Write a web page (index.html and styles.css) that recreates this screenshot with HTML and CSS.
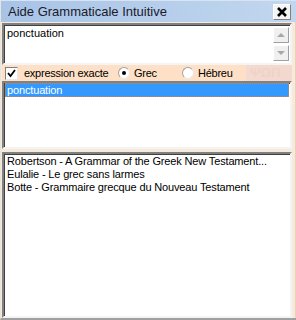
FILE: index.html
```html
<!DOCTYPE html>
<html>
	<head>
		<meta charset="UTF-8">
		<title>Aide Grammaticale Intuitive</title>
		<link rel="stylesheet" href="styles.css">
	</head>
	<body>
		<div class="window">
			<div class="titleBar">
				<span class="titleText">Aide Grammaticale Intuitive</span>
				<span class="closeBu">
					<svg width="10" height="10" viewBox="0 0 10 10">
						<path d="M1 1 L9 9 M9 1 L1 9" stroke="#000" stroke-width="2.6" />
					</svg>
				</span>
			</div>
			<div class="content">
				<div class="searchBox">
					<div class="searchText">ponctuation</div>
					<div class="scroll">
						<span class="scrollBu"><span class="arrowUp"></span></span>
						<span class="scrollBu"><span class="arrowDown"></span></span>
					</div>
				</div>
				<div class="optionsRow">
					<div class="options">
						<span class="check">
							<svg width="9" height="9" viewBox="0 0 9 9">
								<path d="M1 4 L3.5 7 L8 1" stroke="#000" stroke-width="1.8" fill="none" />
							</svg>
						</span>
						<span class="optLabel exact">expression exacte</span>
						<span class="radio on"></span>
						<span class="optLabel grec">Grec</span>
						<span class="radio"></span>
						<span class="optLabel">Hébreu</span>
					</div>
					<div class="watermark">ΨΩΠ</div>
				</div>
				<div class="wordList">
					<div class="item selected">ponctuation</div>
				</div>
				<div class="bookList">
					<div class="item">Robertson - A Grammar of the Greek New Testament...</div>
					<div class="item">Eulalie - Le grec sans larmes</div>
					<div class="item">Botte - Grammaire grecque du Nouveau Testament</div>
				</div>
			</div>
		</div>
	</body>
</html>
```

FILE: styles.css
```css
* {
	margin: 0px;
	padding: 0px;
	box-sizing: border-box;
}

body {
	width: 296px;
	height: 320px;
	overflow: hidden;
	font-family: "Liberation Sans", Arial, sans-serif;
	font-size: 11px;
	color: #000;
}

.window {
	width: 296px;
	height: 320px;
	display: flex;
	flex-direction: column;
	background: #f6eadc;
	border-left: 1px solid #e8e4dc;
	border-bottom: 2px solid #a0a0a0;
}

.titleBar {
	height: 22px;
	display: flex;
	align-items: center;
	justify-content: space-between;
	padding-left: 7px;
	padding-right: 5px;
	background: linear-gradient(to right, #a7c3e6, #c2d7ef);
	border-top: 1px solid #d8e4f2;
}

.titleText {
	font-size: 13px;
	color: #1a1a2a;
}

.closeBu {
	width: 18px;
	height: 16px;
	display: flex;
	align-items: center;
	justify-content: center;
	background: #f4f4f4;
	border: 1px solid #fff;
	border-right-color: #808080;
	border-bottom-color: #808080;
}

.content {
	flex: 1;
	display: flex;
	flex-direction: column;
	padding: 1px 3px 0px 1px;
	border-right: 1px solid #f0d0b0;
}

.searchBox {
	height: 42px;
	display: flex;
	background: #fff;
	border: 2px solid #808080;
	border-right-color: #f4f4f4;
	border-bottom-color: #f4f4f4;
	box-shadow: inset 1px 1px 0px #404040;
}

.searchText {
	flex: 1;
	padding: 2px 3px;
	font-size: 11px;
}

.scroll {
	width: 17px;
	display: flex;
	flex-direction: column;
	gap: 2px;
	padding: 2px 1px 0px 0px;
}

.scrollBu {
	height: 16px;
	display: flex;
	align-items: center;
	justify-content: center;
	background: #f0f0f0;
	border: 1px solid #fff;
	border-right-color: #a0a0a0;
	border-bottom-color: #a0a0a0;
}

.arrowUp {
	border-left: 4px solid transparent;
	border-right: 4px solid transparent;
	border-bottom: 4px solid #a8a8a8;
}

.arrowDown {
	border-left: 4px solid transparent;
	border-right: 4px solid transparent;
	border-top: 4px solid #a8a8a8;
}

.optionsRow {
	height: 16px;
	display: flex;
	align-items: center;
	background: linear-gradient(to right, #f8e4d4, #f3d8d0);
}

.options {
	width: 244px;
	height: 16px;
	display: flex;
	align-items: center;
	padding-left: 3px;
	background: #fde0c6;
}

.check {
	width: 13px;
	height: 13px;
	display: flex;
	align-items: center;
	justify-content: center;
	background: #fff;
	border: 1px solid #808080;
	border-right-color: #e8e8e8;
	border-bottom-color: #e8e8e8;
	margin-right: 6px;
}

.optLabel {
	font-size: 11px;
	letter-spacing: -0.25px;
	white-space: nowrap;
}

.exact {
	width: 94px;
}

.grec {
	width: 48px;
}

.radio {
	width: 12px;
	height: 12px;
	border-radius: 50%;
	background: #fff;
	border: 1px solid #a0a0a0;
	border-right-color: #e8e8e8;
	border-bottom-color: #e8e8e8;
	margin-right: 4px;
	display: flex;
	align-items: center;
	justify-content: center;
}

.radio.on::after {
	content: "";
	width: 4px;
	height: 4px;
	border-radius: 50%;
	background: #000;
}

.watermark {
	flex: 1;
	font-size: 13px;
	font-weight: bold;
	color: #efd2c8;
	padding-left: 4px;
	line-height: 16px;
	white-space: nowrap;
}

.wordList {
	height: 68px;
	background: #fff;
	border: 2px solid #808080;
	border-right-color: #f4f4f4;
	border-bottom-color: #f4f4f4;
	box-shadow: inset 1px 1px 0px #404040;
	padding: 0px 1px;
}

.item {
	height: 13px;
	line-height: 13px;
	padding-left: 2px;
	white-space: nowrap;
	letter-spacing: -0.15px;
}

.selected {
	height: 14px;
	background: #3399ff;
	color: #fff;
	border: 1px dotted #e08030;
	line-height: 12px;
	padding-left: 1px;
}

.bookList {
	flex: 1;
	margin-top: 3px;
	background: #fff;
	border: 2px solid #808080;
	border-right-color: #f4f4f4;
	border-bottom-color: #f4f4f4;
	box-shadow: inset 1px 1px 0px #404040;
	padding: 1px 1px 0px 1px;
}
```
